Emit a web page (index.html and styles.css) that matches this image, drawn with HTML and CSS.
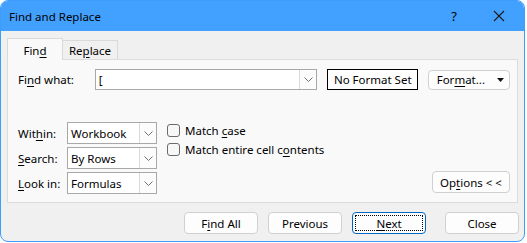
FILE: index.html
```html
<!DOCTYPE html>
<html lang="en">
<head>
    <meta charset="UTF-8">
    <title>Find and Replace</title>
    <link rel="stylesheet" href="styles.css">
</head>
<body>
    <div class="dialog">
        <div class="titlebar">
            <span class="title">Find and Replace</span>
            <span class="help">?</span>
            <svg class="close-x" width="12" height="12" viewBox="0 0 12 12">
                <path d="M1 1 L11 11 M11 1 L1 11" stroke="#1a1a1a" stroke-width="1.1" fill="none"/>
            </svg>
        </div>

        <div class="content">
            <div class="tabs">
                <div class="tab active">Fin<u>d</u></div>
                <div class="tab">Re<u>p</u>lace</div>
            </div>

            <div class="panel">
                <div class="find-row">
                    <label class="find-label">Fi<u>n</u>d what:</label>
                    <div class="combo find-combo">
                        <span class="combo-value">[</span>
                        <span class="combo-arrow">
                            <svg width="9" height="5" viewBox="0 0 9 5"><polyline points="0.5,0.5 4.5,4.5 8.5,0.5" fill="none" stroke="#707070" stroke-width="1"/></svg>
                        </span>
                    </div>
                    <div class="format-preview">No Format Set</div>
                    <button class="btn format-btn">
                        <span>For<u>m</u>at...</span>
                        <svg width="7" height="4" viewBox="0 0 7 4"><polygon points="0,0 7,0 3.5,4" fill="#111"/></svg>
                    </button>
                </div>

                <div class="options">
                    <div class="selects">
                        <label>Wit<u>h</u>in:</label>
                        <div class="combo select">
                            <span class="combo-value">Workbook</span>
                            <span class="combo-arrow"><svg width="9" height="5" viewBox="0 0 9 5"><polyline points="0.5,0.5 4.5,4.5 8.5,0.5" fill="none" stroke="#707070" stroke-width="1"/></svg></span>
                        </div>
                        <label><u>S</u>earch:</label>
                        <div class="combo select">
                            <span class="combo-value">By Rows</span>
                            <span class="combo-arrow"><svg width="9" height="5" viewBox="0 0 9 5"><polyline points="0.5,0.5 4.5,4.5 8.5,0.5" fill="none" stroke="#707070" stroke-width="1"/></svg></span>
                        </div>
                        <label><u>L</u>ook in:</label>
                        <div class="combo select">
                            <span class="combo-value">Formulas</span>
                            <span class="combo-arrow"><svg width="9" height="5" viewBox="0 0 9 5"><polyline points="0.5,0.5 4.5,4.5 8.5,0.5" fill="none" stroke="#707070" stroke-width="1"/></svg></span>
                        </div>
                    </div>

                    <div class="checks">
                        <div class="check"><span class="box"></span><span>Match <u>c</u>ase</span></div>
                        <div class="check"><span class="box"></span><span>Match entire cell c<u>o</u>ntents</span></div>
                    </div>

                    <button class="btn options-btn">Op<u>t</u>ions &lt; &lt;</button>
                </div>
            </div>

            <div class="actions">
                <button class="btn">F<u>i</u>nd All</button>
                <button class="btn">Previous</button>
                <button class="btn default"><span class="focus"><u>N</u>ext</span></button>
                <button class="btn close-btn">Close</button>
            </div>
        </div>
    </div>
</body>
</html>
```

FILE: styles.css
```css
body {
    margin: 0;
    background-color: #ffffff;
    font-family: "Noto Sans", "Open Sans", sans-serif;
    font-size: 11.5px;
    color: #000;
}

u {
    text-underline-offset: 2px;
}

.dialog {
    width: 523px;
    height: 240px;
    border: 1px solid #3e9cff;
    border-radius: 8px;
    background-color: #f0f0f0;
    overflow: hidden;
}

.titlebar {
    height: 30px;
    background-color: #42a0ff;
    display: flex;
    align-items: center;
    padding-left: 8px;
}

.title {
    flex: 1;
    font-size: 11.5px;
}

.help {
    font-size: 13px;
    margin-right: 36px;
}

.close-x {
    margin-right: 19px;
}

.content {
    padding: 7px 0 0 6px;
}

/* tabs */
.tabs {
    display: flex;
    align-items: flex-end;
    height: 21px;
}

.tab {
    height: 19px;
    line-height: 19px;
    border: 1px solid #d9d9d9;
    border-bottom: none;
    background-color: #f0f0f0;
    box-sizing: border-box;
    text-align: center;
    width: 55px;
}

.tab.active {
    position: relative;
    z-index: 1;
    width: 56px;
    height: 22px;
    line-height: 24px;
    margin-bottom: -1px;
    background-color: #f9f9f9;
}

.tab + .tab {
    border-left: none;
}

.panel {
    width: 511px;
    height: 144px;
    box-sizing: border-box;
    border: 1px solid #dcdcdc;
    background-color: #f9f9f9;
    padding: 9px 7px 8px 10px;
}

.find-row {
    display: flex;
    align-items: center;
    height: 21px;
}

.find-label {
    width: 77px;
}

.combo {
    display: flex;
    align-items: stretch;
    background-color: #fff;
    border: 1px solid #a8a8a8;
    box-sizing: border-box;
}

.combo-value {
    flex: 1;
    padding-left: 3px;
    display: flex;
    align-items: center;
}

.combo-arrow {
    width: 16px;
    display: flex;
    align-items: center;
    justify-content: center;
    border-left: 1px solid #dadada;
    background-color: #fcfcfc;
}

.find-combo {
    width: 223px;
    height: 21px;
}

.format-preview {
    margin-left: 10px;
    width: 91px;
    height: 21px;
    box-sizing: border-box;
    border: 1px solid #000;
    background-color: #fff;
    display: flex;
    align-items: center;
    justify-content: center;
}

.btn {
    font-family: inherit;
    font-size: 11.5px;
    color: #000;
    background-color: #fdfdfd;
    border: 1px solid #d0d0d0;
    border-radius: 4px;
    height: 22px;
    box-sizing: border-box;
    padding: 0;
    width: 74px;
}

.format-btn {
    margin-left: 10px;
    width: 82px;
    height: 20px;
    display: flex;
    align-items: center;
    justify-content: flex-end;
    gap: 12px;
    padding-right: 5px;
}

/* options area */
.options {
    margin-top: 32px;
    display: flex;
    align-items: flex-start;
    height: 72px;
}

.selects {
    display: grid;
    grid-template-columns: 49px 90px;
    row-gap: 3px;
    align-items: center;
}

.select {
    height: 22px;
}

.checks {
    margin-left: 10px;
    margin-top: 1px;
    display: flex;
    flex-direction: column;
    gap: 5px;
    flex: 1;
}

.check {
    display: flex;
    align-items: center;
    height: 14px;
}

.box {
    width: 13px;
    height: 13px;
    box-sizing: border-box;
    border: 1px solid #6b6b6b;
    border-radius: 3px;
    background-color: #f7f7f7;
    margin-right: 5px;
}

.options-btn {
    align-self: flex-end;
    margin-bottom: 1px;
    width: 78px;
}

/* bottom buttons */
.actions {
    display: flex;
    margin-top: 9px;
    padding-left: 177px;
    gap: 10px;
}

.btn.default {
    border: 1px solid #0067c0;
    padding: 2px;
}

.focus {
    display: flex;
    align-items: center;
    justify-content: center;
    height: 100%;
    border: 1px dotted #000;
    box-sizing: border-box;
}

.close-btn {
    margin-left: 9px;
}
```
